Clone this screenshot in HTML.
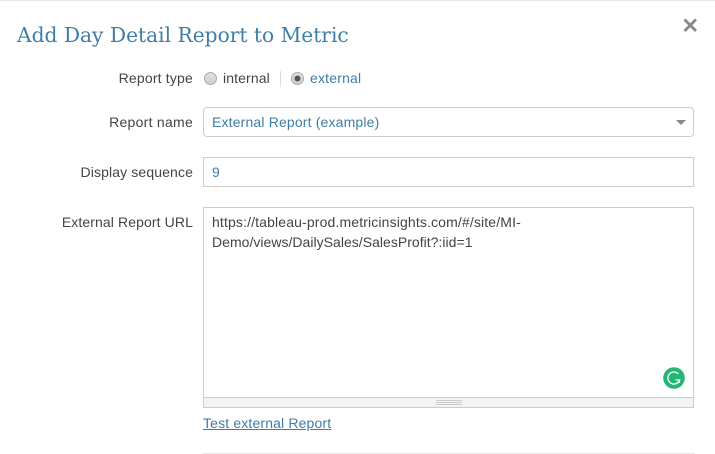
<!DOCTYPE html>
<html>
<head>
<meta charset="utf-8">
<style>
html,body{margin:0;padding:0;background:#fff;}
body{width:715px;height:454px;overflow:hidden;position:relative;font-family:"Liberation Sans",sans-serif;font-size:14px;color:#444;}
.a{position:absolute;white-space:nowrap;line-height:20px;}
.box{position:absolute;box-sizing:border-box;border:1px solid #ccc;background:#fff;}
.lab{right:522px;text-align:right;color:#444;}
.blue{color:#3d7ea6;}
</style>
</head>
<body>
<div class="a" style="left:0;top:0;width:715px;height:1px;background:#e6e6e6;"></div>
<div class="a blue" style="left:17px;top:21px;line-height:28px;font-family:'DejaVu Serif','Liberation Serif',serif;font-size:20.2px;color:#3f7fa6;">Add Day Detail Report to Metric</div>
<svg class="a" style="left:682px;top:17px;" width="16" height="16" viewBox="0 0 16 16"><path d="M2.5 2.5L14 14M14 2.5L2.5 14" stroke="#888" stroke-width="2.8" fill="none"/></svg>

<div class="a lab" style="top:68px;letter-spacing:.18px;">Report type</div>
<svg class="a" style="left:203px;top:71px;" width="15" height="15" viewBox="0 0 15 15"><defs><linearGradient id="g" x1="0" y1="0" x2="0" y2="1"><stop offset="0" stop-color="#e0e0e0"/><stop offset="1" stop-color="#cfcfcf"/></linearGradient></defs><circle cx="7.5" cy="7.5" r="6" fill="url(#g)" stroke="#aaa"/></svg>
<div class="a" style="left:223px;top:68px;letter-spacing:.12px;">internal</div>
<div class="a" style="left:280px;top:71px;width:1px;height:16px;background:#ddd;"></div>
<svg class="a" style="left:290px;top:71px;" width="15" height="15" viewBox="0 0 15 15"><circle cx="7.5" cy="7.5" r="6" fill="url(#g)" stroke="#aaa"/><circle cx="7.5" cy="7.5" r="3" fill="#555"/></svg>
<div class="a blue" style="left:310px;top:68px;letter-spacing:.19px;">external</div>

<div class="a lab" style="top:112px;letter-spacing:.27px;">Report name</div>
<div class="box" style="left:203px;top:107px;width:491px;height:30px;border-radius:4px;"></div>
<div class="a blue" style="left:212px;top:112px;letter-spacing:.16px;">External Report (example)</div>
<div class="a" style="left:676px;top:120px;width:0;height:0;border-left:5px solid transparent;border-right:5px solid transparent;border-top:5px solid #888;"></div>

<div class="a lab" style="top:162px;letter-spacing:.125px;">Display sequence</div>
<div class="box" style="left:203px;top:157px;width:491px;height:30px;"></div>
<div class="a blue" style="left:212px;top:162px;">9</div>

<div class="a lab" style="top:212px;letter-spacing:.105px;">External Report URL</div>
<div class="box" style="left:203px;top:207px;width:491px;height:201px;"></div>
<div class="a" style="left:212px;top:212px;color:#444;letter-spacing:.14px;">https://tableau-prod.metricinsights.com/#/site/MI-</div>
<div class="a" style="left:212px;top:232px;color:#444;letter-spacing:.025px;">Demo/views/DailySales/SalesProfit?:iid=1</div>
<div class="a" style="left:204px;top:397px;width:489px;height:9px;background:#f3f3f3;border-top:1px solid #ccc;"></div>
<div class="a" style="left:436px;top:400px;width:26px;height:1px;background:#ccc;"></div>
<div class="a" style="left:436px;top:402px;width:26px;height:1px;background:#ccc;"></div>
<div class="a" style="left:436px;top:404px;width:26px;height:1px;background:#ccc;"></div>
<svg class="a" style="left:663px;top:367px;" width="22" height="22" viewBox="0 0 22 22"><circle cx="11" cy="11" r="10.8" fill="#25b574"/><path d="M15.4 7A6 6 0 1 0 16.6 13H12.5" stroke="#fff" stroke-width="1.3" fill="none"/><path d="M16.4 12.5V16" stroke="#fff" stroke-width="1.3" fill="none"/></svg>

<div class="a blue" style="left:203px;top:413px;text-decoration:underline;letter-spacing:.15px;">Test external Report</div>
<div class="a" style="left:203px;top:453px;width:491px;height:1px;background:#e6e6e6;"></div>
</body>
</html>
